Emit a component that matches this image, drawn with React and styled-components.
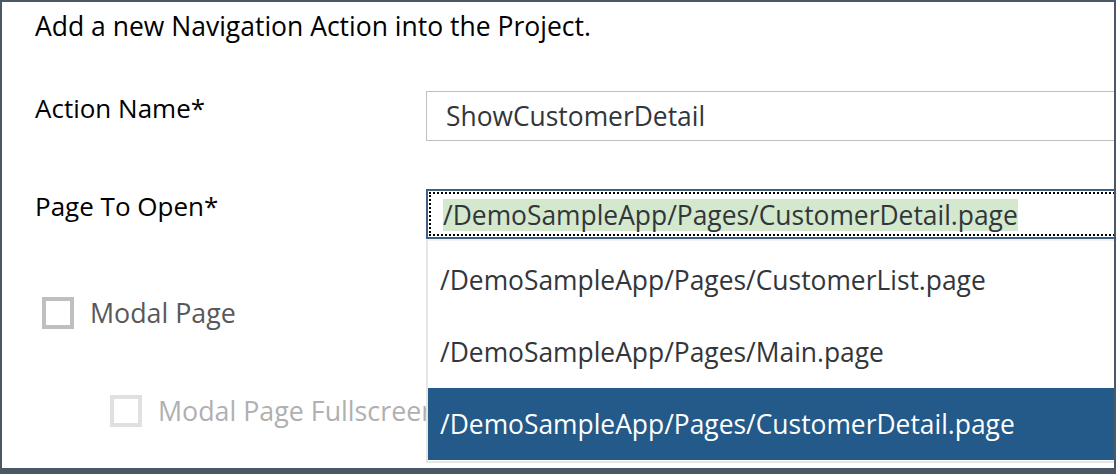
import React from "react";
import styled, { createGlobalStyle } from "styled-components";

const GlobalStyle = createGlobalStyle`
  html, body {
    margin: 0;
    padding: 0;
    background: #ffffff;
  }
  body {
    font-family: "Open Sans", "Noto Sans", sans-serif;
  }
`;

const Frame = styled.div`
  box-sizing: border-box;
  width: 1116px;
  height: 474px;
  border: 2px solid #4a5866;
  border-bottom-width: 6px;
  background: #ffffff;
  overflow: hidden;
  position: relative;
`;

const Content = styled.div`
  padding: 7px 0 0 33px;
`;

const Title = styled.div`
  font-size: 26.5px;
  line-height: 34px;
  color: #000000;
`;

const Form = styled.div`
  display: grid;
  grid-template-columns: 391px 820px;
  row-gap: 48px;
  margin-top: 48px;
`;

const Label = styled.div`
  font-size: 26px;
  line-height: 34px;
  color: #000000;
`;

const Field = styled.div`
  position: relative;
  box-sizing: border-box;
  height: 50px;
  display: flex;
  align-items: center;
  font-size: 26.4px;
  color: #32363a;
  background: #ffffff;
  border: ${(p) => (p.$focused ? "2px solid #3f5e80" : "1px solid #bfbfbf")};
  padding-left: ${(p) => (p.$focused ? "15px" : "19px")};
`;

const FocusRing = styled.div`
  position: absolute;
  inset: 1px;
  border: 2px dotted #000000;
  pointer-events: none;
`;

const Selected = styled.span`
  background: #d3e8cc;
  line-height: 32px;
  color: #32363a;
  position: relative;
  top: 1px;
`;

const Checks = styled.div`
  margin-top: 57px;
  display: flex;
  flex-direction: column;
  gap: 64px;
`;

const CheckRow = styled.div`
  display: flex;
  align-items: center;
  gap: 16px;
  height: 34px;
  padding-left: ${(p) => p.$indent}px;
  font-size: 26.8px;
  line-height: 34px;
  color: ${(p) => (p.$disabled ? "#b0b0b0" : "#595959")};
`;

const Box = styled.span`
  box-sizing: border-box;
  width: 32px;
  height: 32px;
  border: 4px solid ${(p) => (p.$disabled ? "#e0e0e0" : "#bfbfbf")};
  background: #ffffff;
  flex: none;
`;

const List = styled.div`
  position: absolute;
  top: 48px;
  left: -2px;
  width: 820px;
  box-sizing: border-box;
  background: #ffffff;
  border: 2px solid #e6e6e3;
  border-top-color: #f2f2f2;
  padding: 3px 0 1px;
  z-index: 5;
`;

const Item = styled.div`
  height: 72px;
  display: flex;
  align-items: center;
  padding-left: 12px;
  font-size: 26.4px;
  color: ${(p) => (p.$active ? "#ffffff" : "#32363a")};
  background: ${(p) => (p.$active ? "#245a8a" : "transparent")};
`;

const pages = [
  "/DemoSampleApp/Pages/CustomerList.page",
  "/DemoSampleApp/Pages/Main.page",
  "/DemoSampleApp/Pages/CustomerDetail.page",
];

export default function App() {
  return (
    <>
      <GlobalStyle />
      <Frame>
        <Content>
          <Title>Add a new Navigation Action into the Project.</Title>
          <Form>
            <Label>Action Name*</Label>
            <Field>ShowCustomerDetail</Field>
            <Label>Page To Open*</Label>
            <Field $focused>
              <FocusRing />
              <Selected>/DemoSampleApp/Pages/CustomerDetail.page</Selected>
              <List>
                {pages.map((p, i) => (
                  <Item key={p} $active={i === 2}>
                    {p}
                  </Item>
                ))}
              </List>
            </Field>
          </Form>
          <Checks>
            <CheckRow $indent={7}>
              <Box />
              Modal Page
            </CheckRow>
            <CheckRow $indent={75} $disabled>
              <Box $disabled />
              Modal Page Fullscreen
            </CheckRow>
          </Checks>
        </Content>
      </Frame>
    </>
  );
}
